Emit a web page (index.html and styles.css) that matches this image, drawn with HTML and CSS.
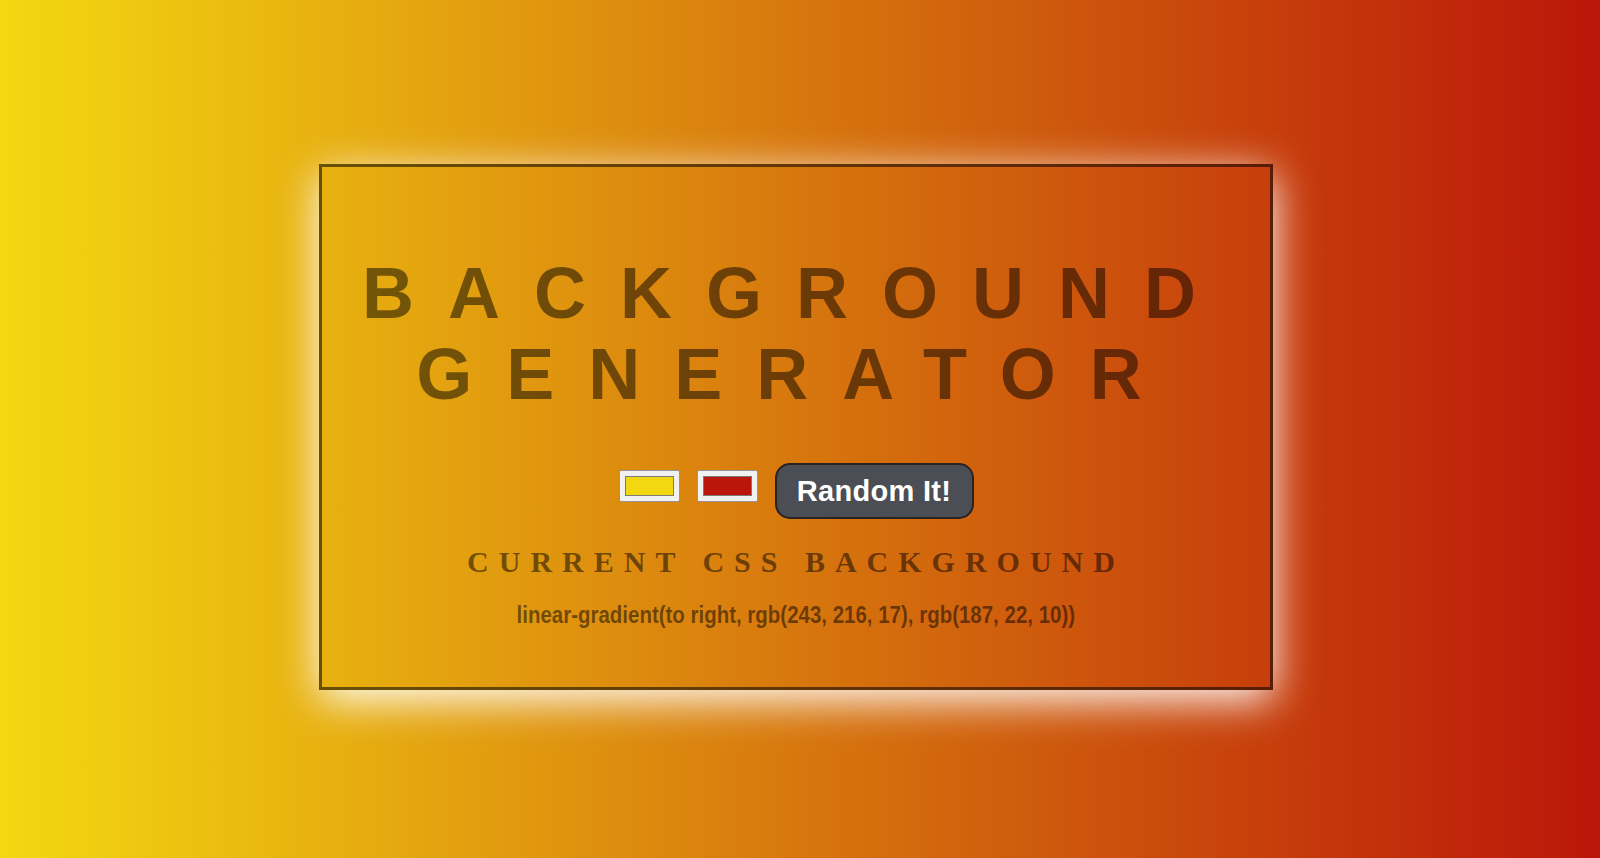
FILE: index.html
```html
<!DOCTYPE html>
<html lang="en">
<head>
<meta charset="utf-8">
<title>Background Generator</title>
<link rel="stylesheet" href="styles.css">
</head>
<body class="page">
  <main class="card">
    <h1 class="title">BACKGROUND<br>GENERATOR</h1>
    <div class="controls">
      <input class="color-input" type="color" name="color1" value="#f3d811">
      <input class="color-input" type="color" name="color2" value="#bb160a">
      <button class="random-btn" type="button">Random It!</button>
    </div>
    <h3 class="subtitle">CURRENT CSS BACKGROUND</h3>
    <p class="css-code"><span class="css-code-text">linear-gradient(to right, rgb(243, 216, 17), rgb(187, 22, 10))</span></p>
  </main>
</body>
</html>
```

FILE: styles.css
```css
html, body {
  margin: 0;
  height: 100%;
}

.page {
  box-sizing: border-box;
  min-height: 100vh;
  padding-right: 8px;
  padding-bottom: 4px;
  display: flex;
  align-items: center;
  justify-content: center;
  background: linear-gradient(to right, rgb(243, 216, 17), rgb(187, 22, 10));
  font-family: "Liberation Sans", Arial, sans-serif;
}

.card {
  width: 948px;
  box-sizing: content-box;
  border: 3px solid rgba(0, 0, 0, 0.55);
  box-shadow: 0 10px 40px #ffffff;
  padding: 86px 0 58px;
  text-align: center;
}

.title {
  margin: 0;
  font-family: "Liberation Sans", Arial, sans-serif;
  font-weight: 700;
  font-size: 72px;
  line-height: 81px;
  letter-spacing: 34px;
  color: rgba(0, 0, 0, 0.5);
}

.controls {
  margin-top: 48px;
  display: flex;
  justify-content: center;
  align-items: flex-start;
  gap: 17px;
}

.color-input {
  -webkit-appearance: none;
  appearance: none;
  box-sizing: border-box;
  width: 61px;
  height: 32px;
  margin: 7px 0 0;
  padding: 0;
  border: 1px solid rgba(90, 90, 90, 0.6);
  border-radius: 2px;
  background: #f1f1f1;
  cursor: pointer;
}

.color-input::-webkit-color-swatch-wrapper {
  padding: 5px 5px;
}

.color-input::-webkit-color-swatch {
  border: 1px solid #7a7a7a;
  border-radius: 0;
}

.random-btn {
  box-sizing: border-box;
  width: 199px;
  height: 56px;
  margin: 0;
  padding: 0;
  border: 2px solid #2b2222;
  border-radius: 15px;
  background: #4b4e55;
  color: #ffffff;
  font-family: "Liberation Sans", Arial, sans-serif;
  font-weight: 700;
  font-size: 29px;
  letter-spacing: 0.3px;
  cursor: pointer;
}

.subtitle {
  margin: 25px 0 0;
  font-family: "Liberation Serif", "Times New Roman", serif;
  font-weight: 700;
  font-size: 30px;
  line-height: 35px;
  letter-spacing: 10px;
  color: rgba(0, 0, 0, 0.5);
}

.css-code {
  margin: 22px 0 0;
  font-family: "Liberation Sans", Arial, sans-serif;
  font-weight: 700;
  font-size: 23px;
  line-height: 28px;
  color: rgba(0, 0, 0, 0.5);
}

.css-code-text {
  display: inline-block;
  transform: scaleX(0.89);
  transform-origin: center;
  white-space: nowrap;
}
```
